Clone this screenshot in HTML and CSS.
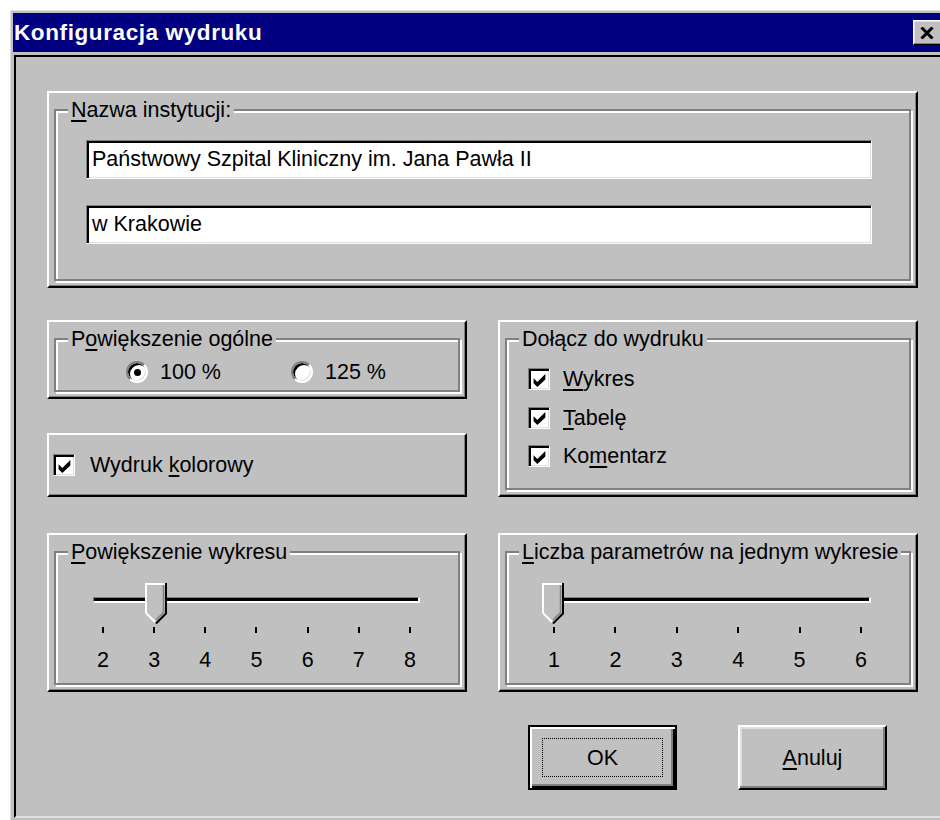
FILE: index.html
```html
<!DOCTYPE html>
<html lang="pl">
<head>
<meta charset="utf-8">
<title>Konfiguracja wydruku</title>
<link rel="stylesheet" href="styles.css">
</head>
<body>
<div class="window">
  <div class="titlebar">
    <span class="title">Konfiguracja wydruku</span>
    <button class="close" aria-label="Zamknij">
      <svg width="14" height="12" viewBox="0 0 14 12"><path d="M1.5 0.5 L12.5 11.5 M12.5 0.5 L1.5 11.5" stroke="#000" stroke-width="3"/></svg>
    </button>
  </div>

  <div class="client">
    <section class="panel panel-wide">
      <fieldset class="group">
        <legend><u>N</u>azwa instytucji:</legend>
        <div class="group-body body-name">
          <div class="field">Państwowy Szpital Kliniczny im. Jana Pawła II</div>
          <div class="field">w Krakowie</div>
        </div>
      </fieldset>
    </section>

    <div class="columns">
      <div class="col">
        <section class="panel panel-zoom">
          <fieldset class="group">
            <legend>P<u>o</u>większenie ogólne</legend>
            <div class="group-body radios">
              <label class="option"><span class="radio checked"></span><span>100 %</span></label>
              <label class="option"><span class="radio"></span><span>125 %</span></label>
            </div>
          </fieldset>
        </section>
        <section class="panel panel-color">
          <label class="option"><span class="check"><svg width="16" height="15" viewBox="0 0 14 14"><path d="M1 5 L4.5 8.5 L12 1 L12 6 L4.5 13 L1 9.5 Z" fill="#000"/></svg></span><span>Wydruk <u>k</u>olorowy</span></label>
        </section>
      </div>

      <section class="panel panel-include">
        <fieldset class="group">
          <legend>Dołącz do wydruku</legend>
          <div class="group-body body-include">
            <label class="option"><span class="check"><svg width="16" height="15" viewBox="0 0 14 14"><path d="M1 5 L4.5 8.5 L12 1 L12 6 L4.5 13 L1 9.5 Z" fill="#000"/></svg></span><span><u>W</u>ykres</span></label>
            <label class="option"><span class="check"><svg width="16" height="15" viewBox="0 0 14 14"><path d="M1 5 L4.5 8.5 L12 1 L12 6 L4.5 13 L1 9.5 Z" fill="#000"/></svg></span><span><u>T</u>abelę</span></label>
            <label class="option"><span class="check"><svg width="16" height="15" viewBox="0 0 14 14"><path d="M1 5 L4.5 8.5 L12 1 L12 6 L4.5 13 L1 9.5 Z" fill="#000"/></svg></span><span>Ko<u>m</u>entarz</span></label>
          </div>
        </fieldset>
      </section>

      <section class="panel panel-slider">
        <fieldset class="group">
          <legend><u>P</u>owiększenie wykresu</legend>
          <div class="group-body body-slider">
            <div class="slider">
              <div class="track-area"><div class="track"></div></div>
              <svg class="thumb" style="left:52px" width="22" height="41" viewBox="0 0 22 41">
                <path d="M0 0 H22 V30 L11 41 L0 30 Z" fill="#c0c0c0"/>
                <path d="M1 30 V1 H20" stroke="#fff" stroke-width="2" fill="none"/>
                <path d="M1 30 L10 39" stroke="#fff" stroke-width="2" fill="none"/>
                <path d="M18.5 2 V29.5 L11 37" stroke="#808080" stroke-width="1.5" fill="none"/>
                <path d="M21 0 V30.5 L11 40.5" stroke="#000" stroke-width="2" fill="none"/>
              </svg>
              <div class="ticks">
                <div class="tick"><i></i><span>2</span></div>
                <div class="tick"><i></i><span>3</span></div>
                <div class="tick"><i></i><span>4</span></div>
                <div class="tick"><i></i><span>5</span></div>
                <div class="tick"><i></i><span>6</span></div>
                <div class="tick"><i></i><span>7</span></div>
                <div class="tick"><i></i><span>8</span></div>
              </div>
            </div>
          </div>
        </fieldset>
      </section>

      <section class="panel panel-slider">
        <fieldset class="group">
          <legend><u>L</u>iczba parametrów na jednym wykresie</legend>
          <div class="group-body body-slider">
            <div class="slider">
              <div class="track-area"><div class="track"></div></div>
              <svg class="thumb" style="left:-2px" width="22" height="41" viewBox="0 0 22 41">
                <path d="M0 0 H22 V30 L11 41 L0 30 Z" fill="#c0c0c0"/>
                <path d="M1 30 V1 H20" stroke="#fff" stroke-width="2" fill="none"/>
                <path d="M1 30 L10 39" stroke="#fff" stroke-width="2" fill="none"/>
                <path d="M18.5 2 V29.5 L11 37" stroke="#808080" stroke-width="1.5" fill="none"/>
                <path d="M21 0 V30.5 L11 40.5" stroke="#000" stroke-width="2" fill="none"/>
              </svg>
              <div class="ticks">
                <div class="tick"><i></i><span>1</span></div>
                <div class="tick"><i></i><span>2</span></div>
                <div class="tick"><i></i><span>3</span></div>
                <div class="tick"><i></i><span>4</span></div>
                <div class="tick"><i></i><span>5</span></div>
                <div class="tick"><i></i><span>6</span></div>
              </div>
            </div>
          </div>
        </fieldset>
      </section>
    </div>

    <div class="buttons">
      <button class="btn btn-default"><span class="focus">OK</span></button>
      <button class="btn"><span><u>A</u>nuluj</span></button>
    </div>
  </div>
</div>
</body>
</html>
```

FILE: styles.css
```css
* {
  box-sizing: border-box;
}

html {
  overflow: hidden;
  scrollbar-width: none;
}

body {
  margin: 0;
  padding: 0;
  width: 960px;
  background: #fff;
  font-family: "Liberation Sans", Arial, sans-serif;
  font-size: 21.5px;
  line-height: 24px;
  color: #000;
}

u {
  text-decoration-thickness: 2px;
  text-underline-offset: 3px;
}

/* Dialog frame */
.window {
  margin: 10px 0 0 10px;
  width: 950px;
  height: 815px;
  background: #c0c0c0;
  border-top: 1px solid #dfdfdf;
  border-left: 1px solid #dfdfdf;
  padding: 2px 0 0 2px;
}

.titlebar {
  width: 935px;
  height: 39px;
  background: #000080;
  color: #fff;
  display: flex;
  align-items: center;
  justify-content: space-between;
  padding: 0 3px 0 1px;
}

.title {
  font-weight: bold;
  font-size: 22.5px;
  letter-spacing: 0.6px;
}

.close {
  width: 32px;
  height: 25px;
  padding: 0 4px 0 0;
  margin: 0;
  background: #c0c0c0;
  border: 1px solid;
  border-color: #fff #000 #000 #fff;
  box-shadow: inset -1px -1px #808080, inset 1px 1px #dfdfdf;
  display: flex;
  align-items: center;
  justify-content: center;
}

.client {
  margin: 3px 0 0 1px;
  height: 763px;
  border-top: 2px solid #000;
  border-left: 2px solid #000;
  border-bottom: 2px solid #dfdfdf;
  padding: 34px 0 0 31px;
}

/* Raised panels holding each group */
.panel {
  background: #c0c0c0;
  border: 2px solid;
  border-color: #fff #000 #000 #fff;
  box-shadow: inset -1px -1px #808080;
  padding: 5px;
}

.panel-wide {
  width: 871px;
  height: 197px;
}

.columns {
  margin-top: 32px;
  width: 871px;
  display: grid;
  grid-template-columns: 420px 420px;
  column-gap: 31px;
  row-gap: 36px;
}

.col {
  display: flex;
  flex-direction: column;
  gap: 34px;
}

.panel-zoom {
  height: 79px;
}

.panel-color {
  height: 64px;
  display: flex;
  align-items: center;
  padding: 0 0 0 4px;
}

.panel-include {
  height: 177px;
}

.panel-slider {
  height: 159px;
}

/* Etched group frames */
.group {
  margin: 0;
  min-inline-size: 0;
  height: 100%;
  border: 2px solid #808080;
  box-shadow: inset 2px 2px 0 #fff, 2px 2px 0 #fff;
  padding: 0;
}

.group legend {
  margin-left: 12px;
  padding: 0 3px;
  background: #c0c0c0;
  line-height: 24px;
  white-space: nowrap;
}

.body-name {
  padding: 18px 0 0 30px;
}

.field {
  width: 786px;
  height: 39px;
  background: #fff;
  border-top: 1px solid #808080;
  border-left: 1px solid #808080;
  border-right: 1px solid #fff;
  border-bottom: 1px solid #fff;
  box-shadow: inset 2px 2px 0 #000, inset -1px -1px 0 #dfdfdf;
  padding: 6px 0 0 5px;
  white-space: nowrap;
}

.field + .field {
  margin-top: 26px;
}

/* Options */
.option {
  display: flex;
  align-items: center;
  white-space: nowrap;
}

.radios {
  display: flex;
  gap: 70px;
  padding: 9px 0 0 70px;
}

.radio {
  width: 22px;
  height: 22px;
  border-radius: 50%;
  border: 2px solid;
  border-color: #808080 #fff #fff #808080;
  box-shadow: inset 2px 2px 0 #000, inset -1px -1px 0 #dfdfdf;
  background: #fff;
  margin-right: 12px;
  display: flex;
  align-items: center;
  justify-content: center;
}

.radio.checked::after {
  content: "";
  width: 7px;
  height: 7px;
  border-radius: 50%;
  background: #000;
}

.check {
  width: 22px;
  height: 22px;
  flex: none;
  background: #fff;
  border-top: 1px solid #808080;
  border-left: 1px solid #808080;
  border-right: 1px solid #fff;
  border-bottom: 1px solid #fff;
  box-shadow: inset 2px 2px 0 #000, inset -1px -1px 0 #dfdfdf;
  display: flex;
  align-items: center;
  justify-content: center;
  padding: 2px 0 0 1px;
  margin-right: 13px;
}

.panel-color .check {
  margin-right: 15px;
}

.body-include {
  padding: 16px 0 0 21px;
  display: flex;
  flex-direction: column;
  gap: 14.5px;
}

/* Track bars */
.body-slider {
  padding: 19px 0 0 37px;
}

.slider {
  position: relative;
  width: 327px;
}

.track-area {
  height: 34px;
  display: flex;
  align-items: center;
}

.track {
  width: 100%;
  height: 6px;
  border-top: 1px solid #808080;
  border-left: 1px solid #808080;
  border-bottom: 2px solid #fff;
  border-right: 2px solid #fff;
  background: #000;
}

.thumb {
  position: absolute;
  top: 0;
}

.ticks {
  margin-top: 10px;
  display: flex;
  justify-content: space-between;
}

.tick {
  width: 20px;
  display: flex;
  flex-direction: column;
  align-items: center;
}

.tick i {
  display: block;
  width: 2px;
  height: 6px;
  background: #000;
}

.tick span {
  margin-top: 15px;
}

/* Dialog buttons */
.buttons {
  width: 871px;
  margin-top: 33px;
  display: flex;
  justify-content: flex-end;
  gap: 61px;
  padding-right: 31px;
}

.btn {
  width: 149px;
  height: 65px;
  padding: 0;
  margin: 0;
  font: inherit;
  color: #000;
  background: #c0c0c0;
  border: 2px solid;
  border-color: #fff #000 #000 #fff;
  box-shadow: inset -2px -2px 0 #808080, inset 2px 2px 0 #dfdfdf;
  display: flex;
  align-items: center;
  justify-content: center;
}

.btn-default {
  border-color: #000;
  box-shadow: inset 2px 2px 0 #fff, inset -2px -2px 0 #000, inset -4px -4px 0 #808080;
  padding: 11px 12px;
}

.focus {
  width: 100%;
  height: 100%;
  border: 1px dotted #000;
  display: flex;
  align-items: center;
  justify-content: center;
}
```
